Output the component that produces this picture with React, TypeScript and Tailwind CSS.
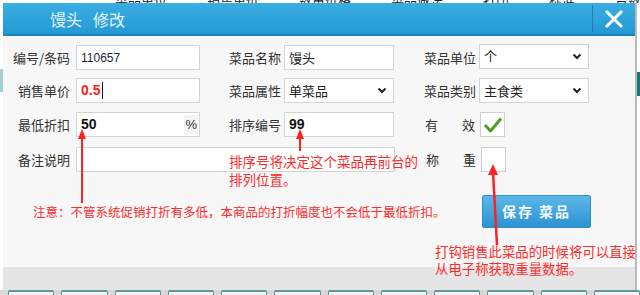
import React from 'react';

const cjk = "font-['Noto_Sans_CJK_SC','Noto_Sans',sans-serif]";
const latin = "font-['Liberation_Sans','Noto_Sans_CJK_SC',sans-serif]";

const Chevron: React.FC = () => (
    <svg width="10" height="7" viewBox="0 0 10 7" className="shrink-0">
        <path d="M1.5 1.5 L5 5 L8.5 1.5" fill="none" stroke="#222" strokeWidth="2" />
    </svg>
);

const Label: React.FC<{ w: string; children: React.ReactNode; right?: boolean }> = ({ w, children, right }) => (
    <div className={`${w} shrink-0 whitespace-nowrap text-[13px] leading-[18px] text-[#333] ${right ? 'text-right' : ''}`}>{children}</div>
);

const Box: React.FC<{ w: string; children?: React.ReactNode; className?: string }> = ({ w, children, className }) => (
    <div className={`${w} h-[25px] shrink-0 bg-white border border-[#d4d4d4] flex items-center px-[4px] ${className ?? ''}`}>
        {children}
    </div>
);

const Select: React.FC<{ value: string }> = ({ value }) => (
    <Box w="w-[110px]" className="justify-between pr-[6px]">
        <span className="text-[13px] text-[#222]">{value}</span>
        <Chevron />
    </Box>
);

const CheckBox: React.FC<{ checked?: boolean }> = ({ checked }) => (
    <div className="w-[25px] h-[25px] shrink-0 bg-white border border-[#cfcfcf] flex items-center justify-center">
        {checked && (
            <svg width="20" height="18" viewBox="0 0 20 18">
                <path d="M2 9 L7.5 15 L18 2.5" fill="none" stroke="#4f9c2c" strokeWidth="3" strokeLinejoin="round" />
            </svg>
        )}
    </div>
);

const App: React.FC = () => {
    const tabs = [8, 62, 116, 170, 224, 278, 332, 386, 440, 494, 548, 602];

    return (
        <div className={`relative w-[640px] h-[295px] overflow-hidden bg-white ${cjk}`}>
            {/* page behind the dialog */}
            <div className="flex flex-col h-full">
                <div className="h-[3px] overflow-hidden">
                    <div className="-mt-[10px] flex gap-[40px] pl-[115px] text-[13px] text-[#222] whitespace-nowrap">
                        <span>菜品单位</span><span>销售单价</span><span>数量价格</span><span>菜品做法</span><span>打印</span><span>标准</span><span>台数</span><span>菜品</span>
                    </div>
                </div>
                <div className="flex-1 flex justify-between">
                    <div className="w-[3px] flex flex-col">
                        <div className="h-[67px] border-b border-[#ccc]" />
                        <div className="h-[22px] bg-[#9fd0cf]" />
                        <div className="flex-1" />
                    </div>
                    <div className="w-[4px] flex flex-col border-l border-[#bbb]">
                        <div className="h-[69px]" />
                        <div className="h-[24px] bg-[#16797a]" />
                        <div className="flex-1" />
                    </div>
                </div>
                <div className="h-[5px] flex gap-[7px] pl-[8px] bg-[#d8d8d8]">
                    {tabs.map((t) => (
                        <div key={t} className="w-[47px] h-full bg-[#eef4f4] border-t-2 border-x border-[#5e9a9a] rounded-t-[2px]" />
                    ))}
                </div>
            </div>

            {/* dialog */}
            <div className="absolute left-[3px] top-[3px] w-[633px] h-[287px] flex flex-col border-r border-[#b8b8b8]">
                <div className="h-[33px] shrink-0 flex items-center bg-gradient-to-b from-[#3aaee2] to-[#2399d4] border-b-2 border-[#1b84bd]">
                    <div className="pl-[47px] flex gap-[11px] text-[16px] text-[#e6f4fc]">
                        <span>馒头</span><span>修改</span>
                    </div>
                    <div className="ml-auto h-[27px] w-px bg-[#1b7fb4]" />
                    <div className="w-[42px] flex justify-center">
                        <svg width="20" height="20" viewBox="0 0 20 20">
                            <path d="M2 2 L18 18 M18 2 L2 18" stroke="#fff" strokeWidth="3" />
                        </svg>
                    </div>
                </div>

                <div className="flex-1 bg-[#f7f7f7] flex flex-col">
                    {/* row 1 */}
                    <div className="mt-[9px] flex items-center">
                        <Label w="w-[67px]" right>编号/条码</Label>
                        <Box w="w-[124px] ml-[6px]">
                            <span className={`${latin} text-[12px] text-[#1c1c3c]`}>110657</span>
                        </Box>
                        <Label w="w-[52px] ml-[29px]">菜品名称</Label>
                        <Box w="w-[110px] ml-[3px]">
                            <span className="text-[13px] text-[#222]">馒头</span>
                        </Box>
                        <Label w="w-[52px] ml-[30px]">菜品单位</Label>
                        <div className="ml-[3px] -mt-[3px]"><Select value="个" /></div>
                    </div>

                    {/* row 2 */}
                    <div className="mt-[8px] flex items-center">
                        <Label w="w-[67px]" right>销售单价</Label>
                        <Box w="w-[124px] ml-[6px]">
                            <span className={`${latin} text-[14px] font-bold text-[#ff2020]`}>0.5</span>
                            <span className="ml-[2px] w-px h-[17px] bg-[#111]" />
                        </Box>
                        <Label w="w-[52px] ml-[29px]">菜品属性</Label>
                        <div className="ml-[3px]"><Select value="单菜品" /></div>
                        <Label w="w-[52px] ml-[30px]">菜品类别</Label>
                        <div className="ml-[3px]"><Select value="主食类" /></div>
                    </div>

                    {/* row 3 */}
                    <div className="mt-[9px] flex items-center">
                        <Label w="w-[67px]" right>最低折扣</Label>
                        <Box w="w-[124px] ml-[6px]" className="justify-between pr-[1px]">
                            <span className={`${latin} text-[14px] font-bold text-[#111]`}>50</span>
                            <span className={`${latin} text-[13px] text-[#333] bg-[#f3f3f3] px-[1px]`}>%</span>
                        </Box>
                        <Label w="w-[52px] ml-[29px]">排序编号</Label>
                        <Box w="w-[110px] ml-[3px]">
                            <span className={`${latin} text-[14px] font-bold text-[#111]`}>99</span>
                        </Box>
                        <div className="w-[50px] ml-[31px] flex justify-between text-[13px] text-[#333]">
                            <span>有</span><span>效</span>
                        </div>
                        <div className="ml-[5px]"><CheckBox checked /></div>
                    </div>

                    {/* row 4 */}
                    <div className="mt-[10px] flex items-center">
                        <Label w="w-[67px]" right>备注说明</Label>
                        <Box w="w-[319px] ml-[6px]" />
                        <div className="w-[50px] ml-[31px] flex justify-between text-[13px] text-[#333]">
                            <span>称</span><span>重</span>
                        </div>
                        <div className="ml-[5px]"><CheckBox /></div>
                    </div>

                    {/* save */}
                    <div className="mt-[23px] pl-[479px]">
                        <button className="w-[109px] h-[33px] rounded-[2px] border border-[#2f8fc8] bg-gradient-to-b from-[#5ab7e8] to-[#2b93d2] text-[14px] font-bold text-[#f2f9fd] tracking-[2px]">
                            保存 菜品
                        </button>
                    </div>
                </div>

                <div className="h-[23px] shrink-0 bg-[#e5e5e5]" />
            </div>

            {/* annotations */}
            <svg className="absolute inset-0" width="640" height="295" viewBox="0 0 640 295">
                <g fill="#ff2020" stroke="#ff2020">
                    <line x1="82" y1="136" x2="82" y2="203" strokeWidth="2" />
                    <polygon points="82,129 78,139 86,139" strokeWidth="0" />
                    <line x1="300" y1="136" x2="300" y2="151" strokeWidth="2" />
                    <polygon points="300,129 296,139 304,139" strokeWidth="0" />
                    <line x1="493" y1="172" x2="497" y2="245" strokeWidth="2.5" />
                    <polygon points="493,164 488,175 498,175" strokeWidth="0" />
                </g>
            </svg>
            <div className="absolute left-[229px] top-[152px] text-[13.5px] leading-[18px] text-[#ff2b2b] whitespace-nowrap">
                <div>排序号将决定这个菜品再前台的</div>
                <div>排列位置。</div>
            </div>
            <div className="absolute left-[33px] top-[203px] text-[12.5px] leading-[18px] text-[#ff2b2b] whitespace-nowrap">
                注意：不管系统促销打折有多低，本商品的打折幅度也不会低于最低折扣。
            </div>
            <div className="absolute left-[435px] top-[243px] text-[13.4px] leading-[17px] text-[#ff2b2b] whitespace-nowrap">
                <div>打钩销售此菜品的时候将可以直接</div>
                <div>从电子称获取重量数据。</div>
            </div>
        </div>
    );
};

export default App;
